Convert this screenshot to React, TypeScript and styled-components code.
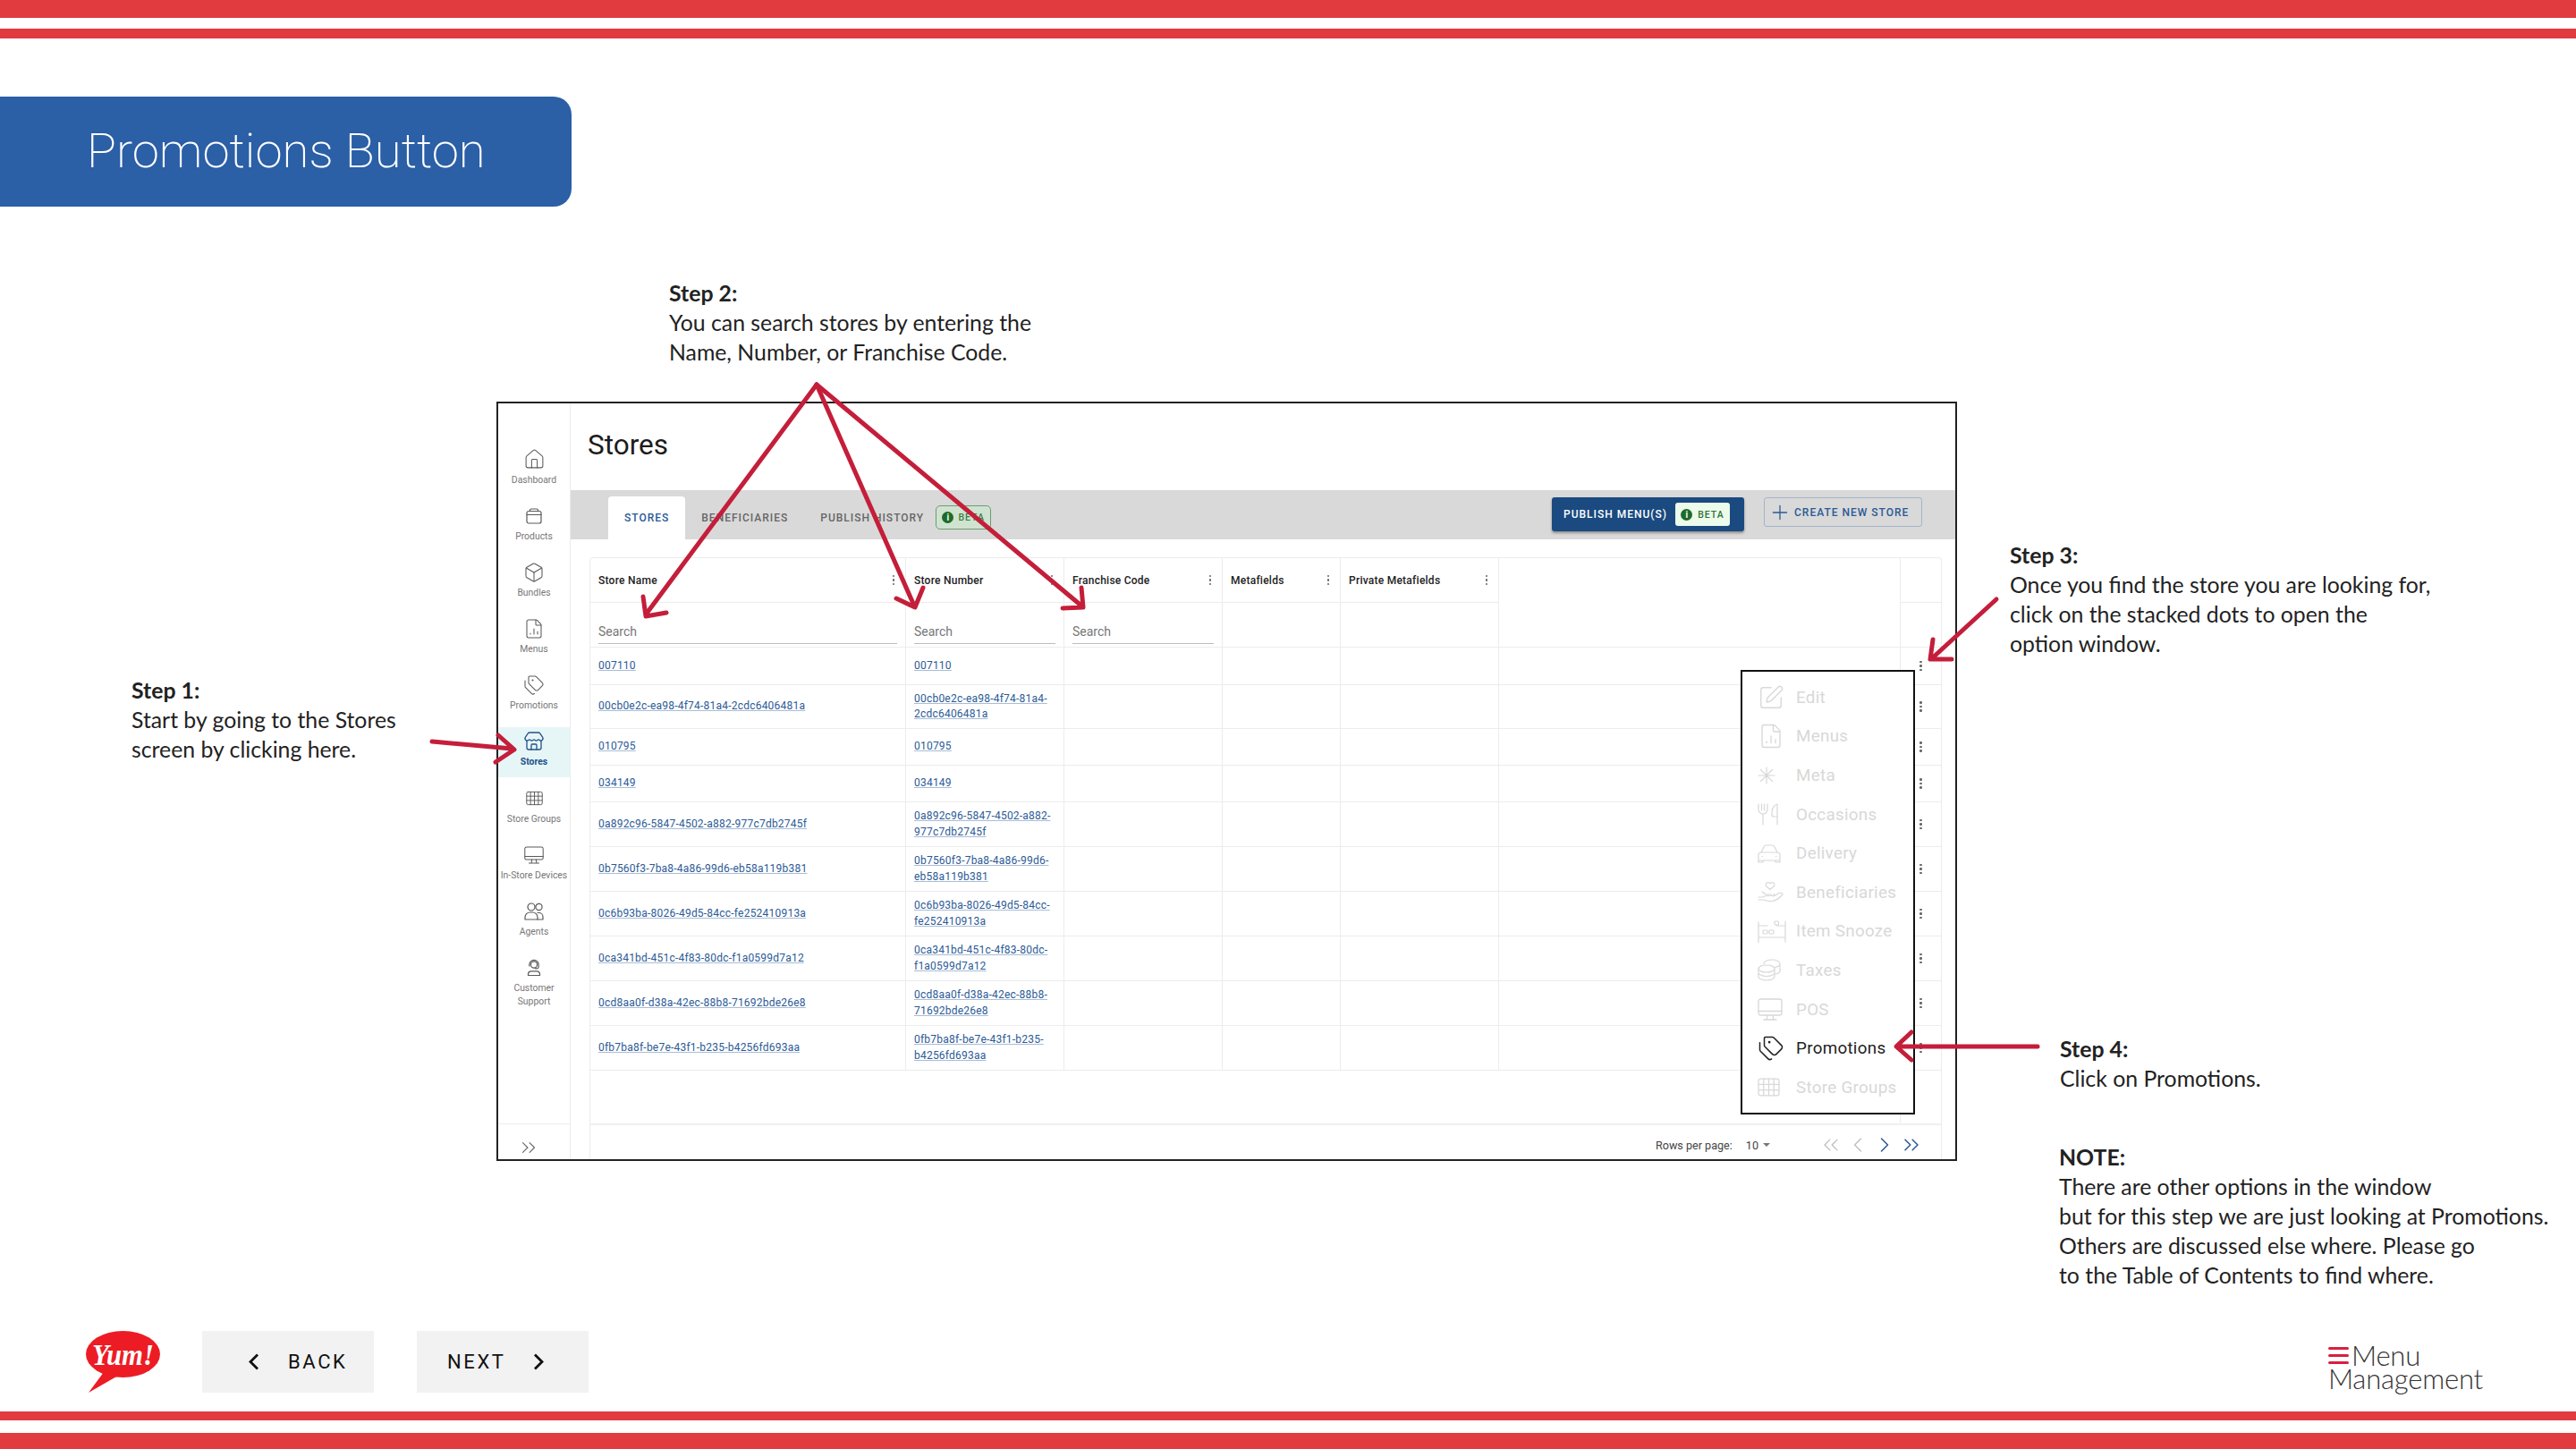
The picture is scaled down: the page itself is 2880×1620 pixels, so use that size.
import React from "react";
import styled, { createGlobalStyle } from "styled-components";
import {
  House, Box, FileChartColumn, Tags, Store, SquarePen,
  Plus, ChevronsLeft, ChevronLeft, ChevronRight, ChevronsRight,
} from "lucide-react";

const RED = "#e13b40";
const ARROW = "#c41e3a";
const LINK = "#2b5a96";
const LINE = "#ececec";

const Global = createGlobalStyle`
  html, body { margin: 0; padding: 0; background: #fff; }
  body { font-family: Roboto, "Liberation Sans", sans-serif; }
  * { box-sizing: border-box; }
`;

const Page = styled.div`
  width: 2880px; height: 1620px;
`;
const Slide = styled.div`
  position: relative; width: 2880px; height: 1620px; overflow: hidden; background: #fff;
  display: flex; flex-direction: column;
`;
const Stripes = styled.div<{ $gap: number }>`
  display: flex; flex-direction: column; gap: ${p => p.$gap}px; flex: none;
`;
const Stripe = styled.div<{ $h: number }>`
  height: ${p => p.$h}px; background: ${RED};
`;
const Banner = styled.div`
  flex: none; margin-top: 65px; width: 639px; height: 123px; background: #2b5fa6;
  border-radius: 0 20px 20px 0; display: flex; align-items: center; padding-left: 97px;
  color: #fff; font-weight: 200; font-size: 54.4px; line-height: 1; white-space: nowrap;
`;
const Frame = styled.div`
  position: relative; flex: none; margin: 218px 0 0 555px; width: 1633px; height: 849px;
  border: 2px solid #222; display: flex; background: #fff;
`;
const Sidebar = styled.nav`
  flex: none; width: 81px; border-right: 1px solid ${LINE}; display: flex; flex-direction: column;
  padding-top: 46px; gap: 7.2px; position: relative;
`;
const NavItem = styled.div<{ $active?: boolean }>`
  height: 56px; display: flex; flex-direction: column; align-items: center; padding-top: 6px;
  background: ${p => (p.$active ? "#e6f6f7" : "transparent")};
  color: ${p => (p.$active ? "#24518a" : "#777")};
`;
const NavIcon = styled.div<{ $active?: boolean }>`
  flex: none; height: 21px; display: flex; align-items: center; justify-content: center;
  color: ${p => (p.$active ? "#24518a" : "#5a5a5a")};
`;
const NavLabel = styled.div<{ $active?: boolean }>`
  margin-top: 4.5px; font-size: 10.4px; line-height: 15px; text-align: center; white-space: pre-line;
  font-weight: ${p => (p.$active ? 700 : 400)};
`;
const SideFoot = styled.div`
  position: absolute; left: 0; right: 0; bottom: 0; height: 40px; border-top: 1px solid ${LINE};
  padding: 13px 0 0 21px; color: #666;
`;
const Main = styled.div`
  flex: 1; min-width: 0; display: flex; flex-direction: column;
`;
const PageTitle = styled.h1`
  flex: none; height: 97px; margin: 0; padding: 27px 0 0 19px; font-size: 31.5px; line-height: 40px;
  font-weight: 400; color: #1c1c1c;
`;
const TabBand = styled.div`
  flex: none; height: 55px; background: #d9d9d9; display: flex; padding: 7px 37px 0 42px; justify-content: space-between;
`;
const Tabs = styled.div`
  display: flex; align-items: stretch;
`;
const Tab = styled.div<{ $active?: boolean }>`
  display: flex; align-items: center; padding: 0 18px 1px; border-radius: 4px 4px 0 0;
  font-size: 12px; font-weight: 500; letter-spacing: 1px; white-space: nowrap;
  background: ${p => (p.$active ? "#fff" : "transparent")};
  color: ${p => (p.$active ? LINK : "#666")};
`;
const BetaBadge = styled.div`
  align-self: flex-start; margin: 10px 0 0 -5px; height: 27px; width: 62px; border: 1px solid #6d9c72; border-radius: 5px;
  background: #cfe3d0; color: #3c7d42; display: flex; align-items: center; justify-content: center; gap: 5px;
  font-size: 10.5px; font-weight: 500; letter-spacing: 1px;
`;
const Dot = styled.span`
  width: 13px; height: 13px; border-radius: 50%; background: #1f6b2a; color: #fff; font-size: 10px; font-weight: 700;
  display: inline-flex; align-items: center; justify-content: center; letter-spacing: 0; flex: none;
`;
const TabActions = styled.div`
  display: flex; gap: 22px; align-items: flex-start; margin-top: 1px;
`;
const PublishButton = styled.div`
  height: 38px; width: 215px; background: #1a4a80; border-radius: 3px; box-shadow: 0 2px 3px rgba(0,0,0,.35);
  color: #fff; font-size: 12px; font-weight: 500; letter-spacing: 1px; display: flex; align-items: center;
  padding-left: 13px; gap: 9px; white-space: nowrap;
`;
const PublishChip = styled.div`
  width: 61px; height: 26px; background: #ecfbea; border-radius: 3px; color: #2f6f38; font-size: 10.5px; letter-spacing: 1px;
  display: flex; align-items: center; justify-content: center; gap: 6px;
`;
const CreateButton = styled.div`
  height: 33px; width: 177px; border: 1px solid #a3b5c9; border-radius: 3px; color: ${LINK}; font-size: 12px; font-weight: 500;
  letter-spacing: 1px; display: flex; align-items: center; padding-left: 4px; gap: 3px; white-space: nowrap;
`;
const TableArea = styled.div`
  flex: 1; min-height: 0; padding: 20px 15px 0 21px; display: flex; flex-direction: column;
`;
const Table = styled.div`
  flex: 1; min-height: 0; display: flex; flex-direction: column; border: 1px solid ${LINE}; border-bottom: none;
  border-radius: 4px 4px 0 0;
`;
const Row = styled.div<{ $h: number }>`
  flex: none; display: grid; grid-template-columns: 353px 177px 177px 132px 177px 449px 1fr; height: ${p => p.$h}px;
`;
const Cell = styled.div<{ $open?: boolean; $action?: boolean }>`
  min-width: 0; display: flex; align-items: center; padding: 0 9px;
  border-right: ${p => (p.$action ? "none" : `1px solid ${LINE}`)};
  border-bottom: ${p => (p.$open ? "none" : `1px solid ${LINE}`)};
  justify-content: ${p => (p.$action ? "center" : "flex-start")};
`;
const HeadCell = styled(Cell)`
  justify-content: space-between; padding-right: 12px; font-size: 12px; font-weight: 500; color: #222; letter-spacing: .25px; white-space: nowrap;
`;
const FilterCell = styled(Cell)`
  align-items: stretch;
`;
const Filter = styled.div`
  flex: 1; margin: 20px 0 3px; border-bottom: 1px solid #bdbdbd; color: #777; font-size: 14px; line-height: 24px;
`;
const LinkBlock = styled.div`
  font-size: 12px; line-height: 17.5px; letter-spacing: .22px;
`;
const LinkText = styled.a`
  color: ${LINK}; text-decoration: underline; text-decoration-color: #a9bdd6; text-underline-offset: 1px;
`;
const Kebab = styled.span`
  display: inline-flex; flex-direction: column; gap: 2px; flex: none;
  i { display: block; width: 2.5px; height: 2.5px; border-radius: 50%; background: #666; }
`;
const TableFill = styled.div`
  flex: 1; display: flex; justify-content: flex-end;
`;
const ActionFill = styled.div`
  width: 46px; border-left: 1px solid ${LINE};
`;
const Pager = styled.div`
  flex: none; height: 40px; border-top: 2px solid #f0f0f0; display: flex; align-items: center; justify-content: flex-end;
  padding: 6px 19px 0 0; font-size: 12.6px; color: #444; white-space: nowrap;
`;
const PerPage = styled.span`
  margin-left: 15px; display: inline-flex; align-items: center; gap: 5px;
`;
const Caret = styled.span`
  width: 0; height: 0; border: 4px solid transparent; border-top-color: #777; border-bottom: none;
`;
const PageButtons = styled.div`
  display: flex; align-items: center; gap: 2px; margin-left: 54px;
`;
const PageIcon = styled.span<{ $on?: boolean }>`
  display: inline-flex; color: ${p => (p.$on ? LINK : "#bdbdbd")};
`;
const Popup = styled.div`
  position: absolute; left: 1389px; top: 298px; width: 195px; height: 497px; background: #fff; border: 2px solid #111;
  padding: 7px 0 0 17px; display: flex; flex-direction: column;
`;
const PopItem = styled.div<{ $on?: boolean }>`
  height: 43.6px; display: flex; align-items: center; font-size: 18.8px; white-space: nowrap; letter-spacing: .3px;
  color: ${p => (p.$on ? "#222" : "#d8d8d8")};
`;
const PopIcon = styled.span`
  width: 43px; flex: none; display: inline-flex; align-items: center;
`;
const Callout = styled.div<{ $x: number; $y: number }>`
  position: absolute; left: ${p => p.$x}px; top: ${p => p.$y}px; font-family: Lato, "Liberation Sans", sans-serif;
  font-size: 24.8px; line-height: 33px; color: #222; white-space: pre;
  b { font-weight: 700; }
`;
const ArrowLayer = styled.svg`
  position: absolute; left: 0; top: 0; pointer-events: none;
`;
const Footer = styled.div`
  flex: none; margin-top: auto; height: 90px; padding: 0 104px 21px 96px; display: flex; align-items: flex-start;
`;
const YumLogo = styled.svg`
  flex: none; overflow: visible;
`;
const NavButton = styled.div<{ $pad: number; $gap: number }>`
  width: 192px; height: 69px; background: #f2f2f2; display: flex; align-items: center; padding-left: ${p => p.$pad}px; gap: ${p => p.$gap}px;
  font-size: 22px; font-weight: 400; letter-spacing: 2.6px; color: #111;
`;
const NavButtons = styled.div`
  display: flex; gap: 48px; margin-left: 47px;
`;
const Brand = styled.div`
  margin-left: auto; margin-top: 14px; font-family: Lato, sans-serif; font-weight: 300; font-size: 31px; line-height: 26px;
  letter-spacing: -.2px; color: #333;
`;
const BrandTop = styled.div`
  display: flex; align-items: center; gap: 3px;
`;
const Burger = styled.span`
  display: flex; flex-direction: column; gap: 5px; width: 23px;
  i { display: block; height: 3px; background: #d8203f; border-radius: 2px; }
`;

type G = { w: number; h: number; vb: string; sw?: number; children: React.ReactNode };
const Glyph = ({ w, h, vb, sw = 1.2, children }: G) => (
  <svg width={w} height={h} viewBox={vb} fill="none" stroke="currentColor" strokeWidth={sw} strokeLinecap="round" strokeLinejoin="round">
    {children}
  </svg>
);
const ProductsIcon = () => (
  <Glyph w={18} h={18} vb="0 0 18 18">
    <rect x="1" y="3.5" width="16" height="13.5" rx="2" />
    <path d="M1 7.5h16M4.5 3.5V2.5A1.5 1.5 0 0 1 6 1h6a1.5 1.5 0 0 1 1.5 1.5v1" />
  </Glyph>
);
const GridIcon = ({ w, h, cols }: { w: number; h: number; cols: number }) => (
  <Glyph w={w} h={h} vb="0 0 24 20">
    <rect x="1" y="1" width="22" height="18" rx="2" />
    <path d="M1 7h22M1 13h22" />
    {Array.from({ length: cols - 1 }, (_, i) => {
      const x = 1 + (22 / cols) * (i + 1);
      return <path key={x} d={`M${x} 1v18`} />;
    })}
  </Glyph>
);
const SupportIcon = () => (
  <Glyph w={20} h={20} vb="0 0 20 20">
    <circle cx="10" cy="6.5" r="3.6" />
    <path d="M4.8 8V6.5a5.2 5.2 0 0 1 10.4 0V9a2 2 0 0 1-2 1.8h-2" />
    <path d="M3.5 18.5v-1.2a3.5 3.5 0 0 1 3.5-3.5h6a3.5 3.5 0 0 1 3.5 3.5v1.2z" />
  </Glyph>
);
const AgentsIcon = () => (
  <Glyph w={22} h={20} vb="0 0 22 20">
    <circle cx="8" cy="5" r="4" />
    <circle cx="16.5" cy="5" r="3.6" />
    <path d="M1 19v-2.5A5.5 5.5 0 0 1 6.5 11h3a5.5 5.5 0 0 1 5.5 5.5V19z" />
    <path d="M15 11.5h1.5a4.5 4.5 0 0 1 4.5 4.5v3h-6" />
  </Glyph>
);
const MonitorIcon = ({ w, h }: { w: number; h: number }) => (
  <Glyph w={w} h={h} vb="0 0 28 25" sw={1.3}>
    <rect x="1" y="1" width="26" height="18" rx="2.5" />
    <path d="M1 14.5h26M11 19l-.8 5M17 19l.8 5M7 24h14" />
  </Glyph>
);
const MetaIcon = () => (
  <Glyph w={20} h={24} vb="0 0 20 24">
    <path d="M10 3v18M1 12h18M3.5 5.5l13 13M16.5 5.5l-13 13" />
  </Glyph>
);
const OccasionsIcon = () => (
  <Glyph w={23} h={25} vb="0 0 23 25">
    <path d="M1 1v6a5 5 0 0 0 10 0V1M4.5 1v7M7.5 1v7M6 12v12" />
    <path d="M22 24V1c-3.5 1-6 5-6 9v3a2 2 0 0 0 2 2h4" />
  </Glyph>
);
const CarIcon = () => (
  <Glyph w={26} h={21} vb="0 0 26 21">
    <path d="M4 9l3-6.2A3 3 0 0 1 9.7 1h6.6A3 3 0 0 1 19 2.8L22 9" />
    <path d="M1 12a3 3 0 0 1 3-3h18a3 3 0 0 1 3 3v6H1zM1 18v2h5v-2M25 18v2h-5v-2" />
    <path d="M5 13.5h.5M20.5 13.5h.5" />
  </Glyph>
);
const HandIcon = () => (
  <Glyph w={29} h={25} vb="0 0 29 25">
    <path d="M14 9.5l-4.6-4A2.6 2.6 0 0 1 13 2l1 .9 1-.9a2.6 2.6 0 0 1 3.6 3.5z" />
    <path d="M5 12c2.5 2.5 4 3 6 3h5" />
    <path d="M1 18h5c2-1.5 4-1.8 6-1.5h5c1.500 0 2-1 1.500-2M18 17l6-3.500c2-1 4 0 4 1.500-3 3.500-7 7-12 7.500-3 .3-6-.5-9-1.500H1" />
  </Glyph>
);
const BedIcon = () => (
  <Glyph w={32} h={25} vb="0 0 32 25">
    <path d="M1 2v23M31 1v23M1 6h10M21 6h10M1 19h30" />
    <rect x="19" y="1" width="4.500" height="4" rx="1" />
    <rect x="6" y="11" width="5" height="4" rx="1" />
    <rect x="13" y="11" width="5" height="4" rx="1" />
  </Glyph>
);
const CoinsIcon = () => (
  <Glyph w={26} h={25} vb="0 0 26 25">
    <ellipse cx="10" cy="11" rx="9" ry="4" />
    <path d="M1 11v9c0 2.200 4 4 9 4s9-1.800 9-4v-9M1 15.500c0 2.200 4 4 9 4s9-1.800 9-4" />
    <path d="M7 5.500C7 3 11 1 16 1s9 2 9 4.500v8c0 1.500-2 3-5 3.500M19 9.500c3-.5 6-2 6-4" />
  </Glyph>
);

const ChevL = () => (
  <svg width="13" height="19" viewBox="0 0 13 19" fill="none" stroke="currentColor" strokeWidth="2.8"><path d="M11 1.500L3 9.500L11 17.500" /></svg>
);
const ChevR = () => (
  <svg width="13" height="19" viewBox="0 0 13 19" fill="none" stroke="currentColor" strokeWidth="2.8"><path d="M2 1.500L10 9.500L2 17.500" /></svg>
);

const navItems: { label: string; icon: React.ReactNode; active?: boolean }[] = [
  { label: "Dashboard", icon: <House size={25} strokeWidth={1} /> },
  { label: "Products", icon: <ProductsIcon /> },
  { label: "Bundles", icon: <Box size={24} strokeWidth={1.05} /> },
  { label: "Menus", icon: <FileChartColumn size={24} strokeWidth={1.05} /> },
  { label: "Promotions", icon: <Tags size={24} strokeWidth={1.05} /> },
  { label: "Stores", icon: <Store size={24} strokeWidth={1.3} />, active: true },
  { label: "Store Groups", icon: <GridIcon w={19} h={17} cols={4} /> },
  { label: "In-Store Devices", icon: <MonitorIcon w={22} h={20} /> },
  { label: "Agents", icon: <AgentsIcon /> },
  { label: "Customer\nSupport", icon: <SupportIcon /> },
];

const rows: { id: string; h: number }[] = [
  { id: "007110", h: 42 },
  { id: "00cb0e2c-ea98-4f74-81a4-2cdc6406481a", h: 49 },
  { id: "010795", h: 41 },
  { id: "034149", h: 41 },
  { id: "0a892c96-5847-4502-a882-977c7db2745f", h: 50 },
  { id: "0b7560f3-7ba8-4a86-99d6-eb58a119b381", h: 50 },
  { id: "0c6b93ba-8026-49d5-84cc-fe252410913a", h: 50 },
  { id: "0ca341bd-451c-4f83-80dc-f1a0599d7a12", h: 50 },
  { id: "0cd8aa0f-d38a-42ec-88b8-71692bde26e8", h: 50 },
  { id: "0fb7ba8f-be7e-43f1-b235-b4256fd693aa", h: 50 },
];

const pop: { label: string; icon: React.ReactNode; on?: boolean }[] = [
  { label: "Edit", icon: <SquarePen size={30} strokeWidth={1.1} /> },
  { label: "Menus", icon: <FileChartColumn size={30} strokeWidth={1.1} /> },
  { label: "Meta", icon: <MetaIcon /> },
  { label: "Occasions", icon: <OccasionsIcon /> },
  { label: "Delivery", icon: <CarIcon /> },
  { label: "Beneficiaries", icon: <HandIcon /> },
  { label: "Item Snooze", icon: <BedIcon /> },
  { label: "Taxes", icon: <CoinsIcon /> },
  { label: "POS", icon: <MonitorIcon w={28} h={25} /> },
  { label: "Promotions", icon: <Tags size={30} strokeWidth={1.2} />, on: true },
  { label: "Store Groups", icon: <GridIcon w={25} h={21} cols={4} /> },
];

const Dots = () => (
  <Kebab><i /><i /><i /></Kebab>
);

const heads = ["Store Name", "Store Number", "Franchise Code", "Metafields", "Private Metafields"];

export default function App() {
  return (
    <Page>
      <Global />
      <Slide>
        <Stripes $gap={12}><Stripe $h={20} /><Stripe $h={11} /></Stripes>
        <Banner>Promotions Button</Banner>

        <Frame>
          <Sidebar>
            {navItems.map(n => (
              <NavItem key={n.label} $active={n.active}>
                <NavIcon $active={n.active}>{n.icon}</NavIcon>
                <NavLabel $active={n.active}>{n.label}</NavLabel>
              </NavItem>
            ))}
            <SideFoot><ChevronsRight size={26} strokeWidth={1} /></SideFoot>
          </Sidebar>
          <Main>
            <PageTitle>Stores</PageTitle>
            <TabBand>
              <Tabs>
                <Tab $active>STORES</Tab>
                <Tab>BENEFICIARIES</Tab>
                <Tab>PUBLISH HISTORY</Tab>
                <BetaBadge><Dot>i</Dot>BETA</BetaBadge>
              </Tabs>
              <TabActions>
                <PublishButton>PUBLISH MENU(S)<PublishChip><Dot>i</Dot>BETA</PublishChip></PublishButton>
                <CreateButton><Plus size={26} strokeWidth={1.2} />CREATE NEW STORE</CreateButton>
              </TabActions>
            </TabBand>
            <TableArea>
              <Table>
                <Row $h={50}>
                  {heads.map(h => <HeadCell key={h}>{h}<Dots /></HeadCell>)}
                  <Cell $open />
                  <Cell $action />
                </Row>
                <Row $h={50}>
                  {heads.map((h, i) => (
                    <FilterCell key={h}>{i < 3 ? <Filter>Search</Filter> : null}</FilterCell>
                  ))}
                  <Cell />
                  <Cell $action />
                </Row>
                {rows.map(r => (
                  <Row key={r.id} $h={r.h}>
                    <Cell><LinkBlock><LinkText>{r.id}</LinkText></LinkBlock></Cell>
                    <Cell><LinkBlock><LinkText>{r.id}</LinkText></LinkBlock></Cell>
                    <Cell /><Cell /><Cell /><Cell />
                    <Cell $action><Dots /></Cell>
                  </Row>
                ))}
                <TableFill><ActionFill /></TableFill>
                <Pager>
                  Rows per page:
                  <PerPage>10<Caret /></PerPage>
                  <PageButtons>
                    <PageIcon><ChevronsLeft size={28} strokeWidth={1.1} /></PageIcon>
                    <PageIcon><ChevronLeft size={28} strokeWidth={1.1} /></PageIcon>
                    <PageIcon $on><ChevronRight size={28} strokeWidth={1.3} /></PageIcon>
                    <PageIcon $on><ChevronsRight size={28} strokeWidth={1.3} /></PageIcon>
                  </PageButtons>
                </Pager>
              </Table>
            </TableArea>
          </Main>
          <Popup>
            {pop.map(p => (
              <PopItem key={p.label} $on={p.on}><PopIcon>{p.icon}</PopIcon>{p.label}</PopItem>
            ))}
          </Popup>
        </Frame>

        <Footer>
          <YumLogo width="83" height="69" viewBox="0 0 83 69">
            <ellipse cx="41.5" cy="26" rx="41.5" ry="26" fill="#ed1c24" />
            <path d="M20 46 L3 69 L36 50 Z" fill="#ed1c24" />
            <text x="7" y="38" fill="#fff" fontFamily="'Liberation Serif', serif" fontWeight="700" fontStyle="italic" fontSize="33" textLength="69" lengthAdjust="spacingAndGlyphs">Yum!</text>
          </YumLogo>
          <NavButtons>
            <NavButton $pad={51} $gap={32}><ChevL />BACK</NavButton>
            <NavButton $pad={34} $gap={30}>NEXT<ChevR /></NavButton>
          </NavButtons>
          <Brand>
            <BrandTop><Burger><i /><i /><i /></Burger>Menu</BrandTop>
            Management
          </Brand>
        </Footer>
        <Stripes $gap={14}><Stripe $h={10} /><Stripe $h={18} /></Stripes>

        <Callout $x={748} $y={311}><b>Step 2:</b>{"\nYou can search stores by entering the\nName, Number, or Franchise Code."}</Callout>
        <Callout $x={147} $y={755}><b>Step 1:</b>{"\nStart by going to the Stores\nscreen by clicking here."}</Callout>
        <Callout $x={2247} $y={604}><b>Step 3:</b>{"\nOnce you find the store you are looking for,\nclick on the stacked dots to open the\noption window."}</Callout>
        <Callout $x={2303} $y={1156}><b>Step 4:</b>{"\nClick on Promotions."}</Callout>
        <Callout $x={2302} $y={1277}><b>NOTE:</b>{"\nThere are other options in the window\nbut for this step we are just looking at Promotions.\nOthers are discussed else where. Please go\nto the Table of Contents to find where."}</Callout>

        <ArrowLayer width="2880" height="1620" viewBox="0 0 2880 1620" fill="none" stroke={ARROW} strokeWidth="5" strokeLinecap="round" strokeLinejoin="round">
          <path d="M913 430L722 687M719 667L722 689L745 685" />
          <path d="M913 430L1022 677M1032 657L1023 679L1002 669" />
          <path d="M913 430L1210 678M1209 657L1211 679L1188 680" />
          <path d="M483 829L572 837M557 822L575 838L554 852" />
          <path d="M2232 670L2160 736M2161 715L2158 737L2182 737" />
          <path d="M2278 1170L2122 1170M2137 1154L2120 1170L2137 1185" />
        </ArrowLayer>
      </Slide>
    </Page>
  );
}
